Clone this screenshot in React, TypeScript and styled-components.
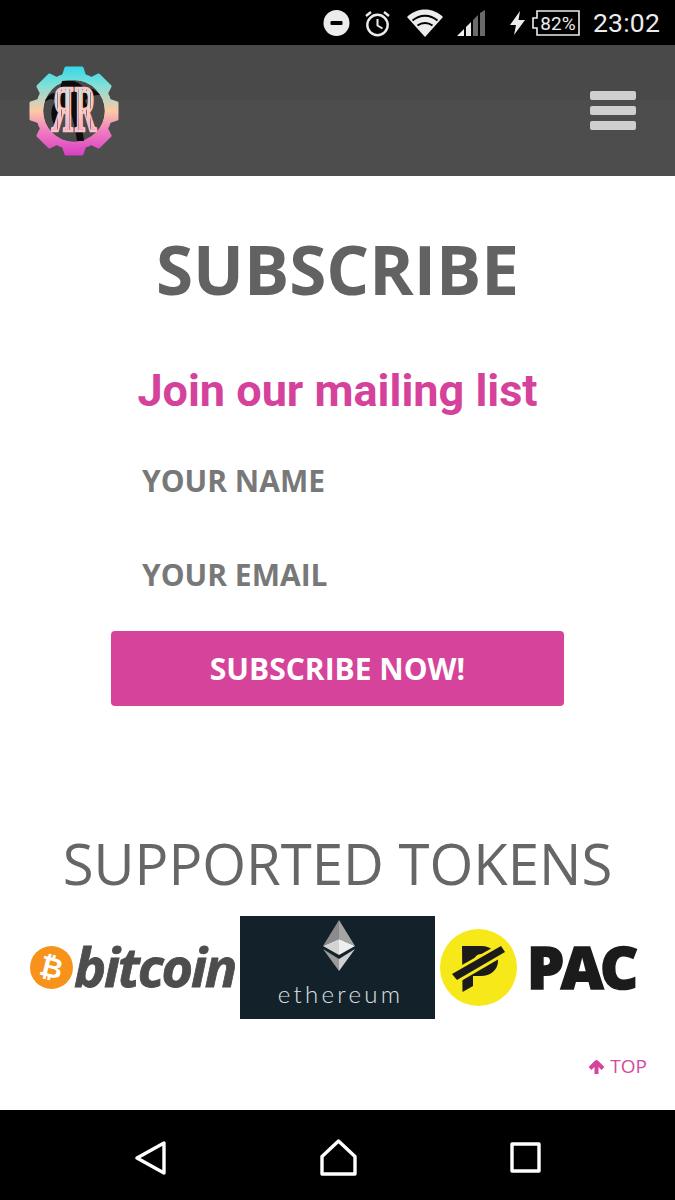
import styled, { createGlobalStyle } from "styled-components";

const GlobalStyle = createGlobalStyle`
  html, body {
    margin: 0;
    padding: 0;
    background: #fff;
  }
`

const Page = styled.div`
  width: 675px;
  height: 1200px;
  display: flex;
  flex-direction: column;
  overflow: hidden;
  font-family: "Open Sans", sans-serif;
`

const StatusBar = styled.div`
  height: 45px;
  flex: none;
  background: #000;
  display: flex;
  align-items: center;
  justify-content: flex-end;
  padding-right: 15px;
  box-sizing: border-box;
  color: #ececec;
`

const StatusIcon = styled.svg<{ $gap: number }>`
  display: block;
  flex: none;
  margin-right: ${(p) => p.$gap}px;
`

const Clock = styled.span`
  font-family: Roboto, sans-serif;
  font-size: 26.5px;
  line-height: 45px;
  letter-spacing: 0.2px;
`

const Header = styled.header`
  height: 131px;
  flex: none;
  background: linear-gradient(#494949 0, #494949 42%, #4d4d4d 42%, #4d4d4d 100%);
  display: flex;
  align-items: center;
  justify-content: space-between;
  padding: 0 39px 0 28px;
  box-sizing: border-box;
`

const Burger = styled.div`
  width: 46px;
  display: flex;
  flex-direction: column;
  gap: 6px;
`

const BurgerBar = styled.span`
  height: 9px;
  border-radius: 2px;
  background: #cfcfcf;
`

const Main = styled.main`
  flex: 1;
  background: #fff;
  display: flex;
  flex-direction: column;
  align-items: center;
`

const Title = styled.h1`
  margin: 49px 0 0;
  font-size: 67.4px;
  line-height: 88px;
  font-weight: 700;
  color: #626262;
`

const Subtitle = styled.h2`
  margin: 50px 0 0;
  font-family: Roboto, sans-serif;
  font-size: 45px;
  line-height: 56px;
  font-weight: 700;
  color: #d5429b;
`

const Form = styled.form`
  width: 453px;
  margin-top: 14px;
  display: flex;
  flex-direction: column;
`

const Field = styled.input`
  height: 94px;
  box-sizing: border-box;
  border: none;
  outline: none;
  background: transparent;
  padding: 0 0 0 31px;
  font-family: "Open Sans", sans-serif;
  font-size: 30px;
  font-weight: 700;

  &::placeholder {
    color: #787878;
    opacity: 1;
  }
`

const SubmitButton = styled.button`
  height: 75px;
  margin-top: 10px;
  border: none;
  border-radius: 4px;
  background: #d5449a;
  color: #fff;
  font-family: "Open Sans", sans-serif;
  font-size: 30px;
  font-weight: 700;
`

const TokensTitle = styled.h2`
  margin: 120px 0 0;
  font-size: 56.3px;
  line-height: 74px;
  font-weight: 400;
  color: #666;
`

const Tokens = styled.div`
  width: 100%;
  height: 103px;
  margin-top: 16px;
  padding-left: 30px;
  box-sizing: border-box;
  display: flex;
  align-items: center;
`

const BitcoinLogo = styled.div`
  width: 210px;
  flex: none;
  display: flex;
  align-items: center;
`

const BitcoinWord = styled.span`
  font-size: 54px;
  line-height: 60px;
  font-weight: 700;
  font-style: italic;
  letter-spacing: -2.2px;
  color: #4d4d4d;
  margin-left: 1px;
  margin-bottom: 3px;
  -webkit-text-stroke: 0.8px #4d4d4d;
`

const EthereumLogo = styled.div`
  width: 195px;
  height: 103px;
  flex: none;
  background: #13212b;
  display: flex;
  flex-direction: column;
  align-items: center;
`

const EthereumGlyph = styled.svg`
  display: block;
  margin: 4px 0 0 3px;
`

const EthereumWord = styled.span`
  font-family: Lato, sans-serif;
  font-size: 24px;
  line-height: 28px;
  font-weight: 300;
  letter-spacing: 3.3px;
  color: #dfe2e4;
  margin: 9px 0 0 6px;
`

const PacLogo = styled.div`
  margin-left: 5px;
  display: flex;
  align-items: center;
`

const PacWord = styled.span`
  margin: 0 0 4px 10px;
  font-size: 59px;
  line-height: 60px;
  font-weight: 800;
  letter-spacing: -3.6px;
  color: #1b1b1b;
  -webkit-text-stroke: 1.5px #1b1b1b;
`

const TopLink = styled.a`
  align-self: flex-end;
  margin: 34px 28px 0 0;
  display: flex;
  align-items: center;
  gap: 5px;
  font-size: 19px;
  line-height: 26px;
  color: #d5499d;
`

const NavBar = styled.nav`
  height: 90px;
  flex: none;
  background: #000;
  display: flex;
  align-items: center;
  justify-content: space-between;
  padding: 5px 134px 0 135px;
  box-sizing: border-box;
`

const GEAR_TEETH = [0, 45, 90, 135, 180, 225, 270, 315]

const RR = ({ x, flip }: { x: number; flip?: boolean }) => (
  <text
    x="0"
    y="0"
    fontFamily="'Liberation Serif', serif"
    fontSize="65"
    fontWeight="700"
    fill="url(#letterStripes)"
    stroke="#f9c4c8"
    strokeWidth="2.6"
    transform={`translate(${x} 66) scale(${flip ? -0.46 : 0.46} 1)`}
  >
    R
  </text>
)

const GearLogo = () => (
  <svg width="92" height="92" viewBox="0 0 92 92">
    <defs>
      <linearGradient id="gearFill" x1="0" y1="0" x2="0" y2="1">
        <stop offset="0" stopColor="#2fd8ea" />
        <stop offset="0.22" stopColor="#7fe0d8" />
        <stop offset="0.5" stopColor="#fccaa6" />
        <stop offset="0.72" stopColor="#f07cc0" />
        <stop offset="1" stopColor="#d63cc4" />
      </linearGradient>
      <linearGradient id="letterFill" x1="0" y1="0" x2="0" y2="1">
        <stop offset="0" stopColor="#b4ece2" />
        <stop offset="0.5" stopColor="#fdd0bc" />
        <stop offset="1" stopColor="#f59ad2" />
      </linearGradient>
      <pattern id="letterStripes" patternUnits="userSpaceOnUse" x="0" y="-45" width="9" height="50">
        <rect width="9" height="50" fill="url(#letterFill)" />
        <rect x="7.6" width="1.4" height="50" fill="#5a4a58" />
      </pattern>
      <mask id="gearMask" maskUnits="userSpaceOnUse" x="0" y="0" width="92" height="92">
        <rect width="92" height="92" fill="#000" />
        <circle cx="46" cy="46" r="38.5" fill="#fff" />
        {GEAR_TEETH.map((deg) => (
          <path
            key={deg}
            d="M38 3H54L57 12H35Z"
            fill="#fff"
            stroke="#fff"
            strokeWidth="3"
            strokeLinejoin="round"
            transform={`rotate(${deg} 46 46)`}
          />
        ))}
        <circle cx="46" cy="46" r="30.5" fill="#000" />
      </mask>
    </defs>
    <rect width="92" height="92" fill="url(#gearFill)" mask="url(#gearMask)" />
    <circle cx="46" cy="46" r="30.5" fill="#4a4a4a" />
    <path d="M34 16C44 14 52 17 57 24 62 22 67 24 72 30 64 30 60 32 57 36 62 44 64 52 62 58 58 50 54 44 50 42 52 56 55 66 56 76H49C47 62 44 50 41 44 35 46 30 52 27 62 22 52 22 42 28 36 24 33 20 34 17 37 19 30 25 27 31 28 32 24 33 20 34 16Z" fill="#0c0c0c" />
    <RR x={45.5} flip />
    <RR x={46.5} />
  </svg>
)

const BitcoinMark = () => (
  <svg width="43" height="43" viewBox="0 0 43 43">
    <circle cx="21.5" cy="21.5" r="21.5" fill="#f7931a" />
    <text x="21.5" y="31" textAnchor="middle" fontFamily="'Open Sans', sans-serif" fontSize="28" fontWeight="700" fill="#fff" transform="rotate(14 21.5 21.5)">₿</text>
  </svg>
)

const EthereumMark = () => (
  <EthereumGlyph width="32" height="51" viewBox="0 0 32 51">
    <path d="M16 0 0 26 16 19Z" fill="#8b8b8b" />
    <path d="M16 0 32 26 16 19Z" fill="#a5a5a5" />
    <path d="M16 19 0 26 16 35Z" fill="#d4d4d4" />
    <path d="M16 19 32 26 16 35Z" fill="#eeeeee" />
    <path d="M0 29 16 51V39Z" fill="#9a9a9a" />
    <path d="M32 29 16 51V39Z" fill="#d0d0d0" />
  </EthereumGlyph>
)

const PacMark = () => (
  <svg width="77" height="77" viewBox="0 0 77 77">
    <circle cx="38.5" cy="38.5" r="38.5" fill="#f6e819" />
    <path d="M22 17H41C52 17 58 24 58 32C58 41 50 47 41 47H33V57L22.5 63Z" fill="#1b1b1b" />
    <circle cx="41" cy="32" r="7" fill="#f6e819" />
    <path d="M10.5 42.5 60 14.5 66.5 25.5 18.5 53.5Z" fill="#f6e819" />
    <path d="M12 45 61 17 65 23 17 51Z" fill="#1b1b1b" />
  </svg>
)

export default function App() {
  return (
    <Page>
      <GlobalStyle />
      <StatusBar>
        <StatusIcon $gap={14} width="27" height="26" viewBox="0 0 27 26">
          <circle cx="13.5" cy="13" r="13" fill="#ececec" />
          <rect x="7.5" y="11" width="12" height="4" rx="1" fill="#000" />
        </StatusIcon>
        <StatusIcon $gap={16} width="27" height="28" viewBox="0 0 27 28" fill="none" stroke="#ececec" strokeWidth="2.4">
          <circle cx="13.5" cy="16" r="10.2" />
          <path d="M13.5 10v6.5l5 3" strokeWidth="2" />
          <path d="M2 7 7 3M25 7 20 3" />
        </StatusIcon>
        <StatusIcon $gap={14} width="36" height="28" viewBox="0 0 36 28">
          <path d="M0 8C10-2 26-2 36 8L18 28Z" fill="#ececec" />
          <path d="M5.5 11.5C13 5 23 5 30.5 11.5" fill="none" stroke="#000" strokeWidth="2" />
          <path d="M10.5 16.5C15 13 21 13 25.5 16.5" fill="none" stroke="#000" strokeWidth="2" />
        </StatusIcon>
        <StatusIcon $gap={24} width="29" height="26" viewBox="0 0 29 26">
          <path d="M0 26 7 19V26Z" fill="#f2f2f2" />
          <path d="M9 17 14 12V26H9Z" fill="#e8e8e8" />
          <path d="M16 10 21 5V26H16Z" fill="#6a6a6a" />
          <path d="M23 3 28 0V26H23Z" fill="#6a6a6a" />
        </StatusIcon>
        <StatusIcon $gap={5} width="15" height="24" viewBox="0 0 15 24">
          <path d="M10 0 0 14H6L4 24 15 9H8.5Z" fill="#ececec" />
        </StatusIcon>
        <StatusIcon $gap={13} width="50" height="26" viewBox="0 0 50 26">
          <path d="M7 1H49V25H7V18H3V8H7Z" fill="none" stroke="#ececec" strokeWidth="1.6" />
          <text x="28" y="20" textAnchor="middle" fontFamily="Roboto, sans-serif" fontSize="19" fill="#ececec">82%</text>
        </StatusIcon>
        <Clock>23:02</Clock>
      </StatusBar>

      <Header>
        <GearLogo />
        <Burger>
          <BurgerBar />
          <BurgerBar />
          <BurgerBar />
        </Burger>
      </Header>

      <Main>
        <Title>SUBSCRIBE</Title>
        <Subtitle>Join our mailing list</Subtitle>
        <Form>
          <Field placeholder="YOUR NAME" />
          <Field placeholder="YOUR EMAIL" />
          <SubmitButton type="button">SUBSCRIBE NOW!</SubmitButton>
        </Form>
        <TokensTitle>SUPPORTED TOKENS</TokensTitle>
        <Tokens>
          <BitcoinLogo>
            <BitcoinMark />
            <BitcoinWord>bitcoin</BitcoinWord>
          </BitcoinLogo>
          <EthereumLogo>
            <EthereumMark />
            <EthereumWord>ethereum</EthereumWord>
          </EthereumLogo>
          <PacLogo>
            <PacMark />
            <PacWord>PAC</PacWord>
          </PacLogo>
        </Tokens>
        <TopLink>
          <svg width="17" height="15" viewBox="0 0 17 15" fill="none" stroke="#d5449a" strokeWidth="4" strokeLinejoin="round">
            <path d="M8.5 15V3M2 9.5 8.5 3 15 9.5" />
          </svg>
          TOP
        </TopLink>
      </Main>

      <NavBar>
        <svg width="31" height="34" viewBox="0 0 31 34" fill="none" stroke="#fff" strokeWidth="3.4" strokeLinejoin="round">
          <path d="M29 2V32L2 17Z" />
        </svg>
        <svg width="37" height="37" viewBox="0 0 37 37" fill="none" stroke="#fff" strokeWidth="3.4" strokeLinejoin="round">
          <path d="M18.5 2 35 17.5V35H2V17.5Z" />
        </svg>
        <svg width="31" height="31" viewBox="0 0 31 31" fill="none" stroke="#fff" strokeWidth="3.4" strokeLinejoin="round">
          <rect x="2" y="2" width="27" height="27" />
        </svg>
      </NavBar>
    </Page>
  )
}
